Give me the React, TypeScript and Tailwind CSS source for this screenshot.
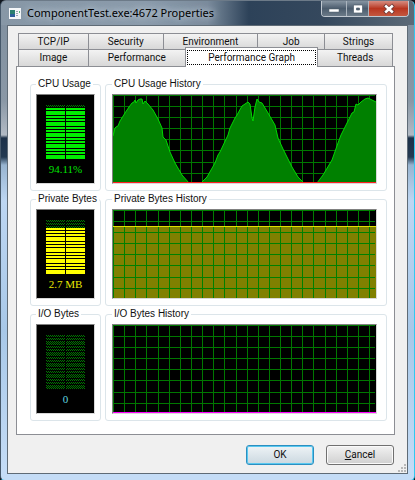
import React from 'react';

const CPU_POINTS =
  '0,41 2,33 3,32 5,31 7,26 12,18 16,12 19,8 21,7 22,5 23,8 25,5 27,4 29,4 30,9 32,6 35,9 40,15 45,24 49,33 50,42 53,45 57,57 62,68 69,80 76,88 88,88 94,82 102,68 105,60 107,57 115,40 117,33 122,23 124,20 129,11 132,9 135,7 137,9 139,23 140,26 142,12 144,4 146,7 149,8 155,18 162,30 165,43 170,54 179,72 185,82 191,88 204,88 210,80 219,65 225,48 228,40 234,28 239,18 241,17 243,9 245,10 248,7 252,4 255,3 259,5 263,7';

const COLUMNS = [0, 11, 22, 33, 45, 56, 67, 78, 89, 100, 111, 123, 134, 145, 156, 167, 178, 189, 200, 212, 223, 234, 245, 256];
const ROWS = [0, 11, 22, 33, 44, 55, 67, 78];
const SEGMENTS = 20;

interface MeterProps {
  value: string;
  level: number;
  color: string;
  textClass: string;
}

const Meter: React.FC<MeterProps> = ({ value, level, color, textClass }) => (
  <div className="flex h-[90px] flex-col items-center border border-[#808080] border-r-[#d8d8d8] border-b-[#d8d8d8] bg-black pt-[10px]">
    <svg className="h-[55px] w-[39px] shrink-0" viewBox="0 0 39 55" shapeRendering="crispEdges" aria-hidden="true">
      {Array.from({ length: SEGMENTS }, (_, i) => {
        const y = Math.round(i * 2.75);
        if (i >= SEGMENTS - level) {
          return (
            <g key={i} fill={color}>
              <rect x="0" y={y} width="19" height="2" />
              <rect x="20" y={y} width="19" height="2" />
            </g>
          );
        }
        // unlit segment: two dotted lines, offset like a checkerboard
        return (
          <g key={i} fill="#007800">
            {Array.from({ length: 19 }, (_, x) => (
              <rect key={x} x={x * 2 + (x > 9 ? 1 : 0)} y={y} width="1" height="1" />
            ))}
            {Array.from({ length: 19 }, (_, x) => (
              <rect key={x} x={x * 2 + (x > 8 ? 2 : 1)} y={y + 1} width="1" height="1" />
            ))}
          </g>
        );
      })}
    </svg>
    <span className={`mt-[2px] font-['Liberation_Serif',serif] text-[11px] leading-[14px] ${textClass}`}>{value}</span>
  </div>
);

const Grid: React.FC<{ color?: string }> = ({ color = '#007800' }) => (
  <g fill={color} shapeRendering="crispEdges">
    {COLUMNS.map((x) => (
      <rect key={x} x={x} y="0" width="1" height="88" />
    ))}
    {ROWS.map((y) => (
      <rect key={y} x="0" y={y} width="262" height="1" />
    ))}
  </g>
);

const Chart: React.FC<{ label: string; children: React.ReactNode }> = ({ label, children }) => (
  <div className="h-[90px] border border-[#808080] border-r-[#d8d8d8] border-b-[#d8d8d8] bg-black">
    <svg className="block h-[88px] w-full" viewBox="0 0 263 88" preserveAspectRatio="none" role="img" aria-label={label}>
      {children}
    </svg>
  </div>
);

const Group: React.FC<{ title: string; className: string; children: React.ReactNode }> = ({ title, className, children }) => (
  <fieldset className={`min-w-0 rounded-[3px] border border-[#dce5ea] pb-[6px] ${className}`}>
    <legend className="mb-[3px] whitespace-nowrap px-[2px] font-['Liberation_Sans',sans-serif] text-[10px] leading-[14px] text-[#111]">
      {title}
    </legend>
    {children}
  </fieldset>
);

const Tab: React.FC<{ label: string; className: string }> = ({ label, className }) => (
  <button
    role="tab"
    aria-selected="false"
    className={`min-w-0 whitespace-nowrap border-l border-t border-[#8c8e94] bg-linear-to-b from-[#f3f3f3] to-[#d8d8d8] text-center leading-[14px] ${className}`}
  >
    {label}
  </button>
);

export default function App() {
  return (
    <div className="bg-[#10161e]">
      <main className="rounded-t-[6px] rounded-b-[5px] border border-[#30c8f0] border-t-[#6c7a88] border-l-[#46586a] bg-[linear-gradient(180deg,#7f8f9f_0px,#8a98a6_100px,#b2bac4_134px,#1c3048_137px,#243a52_156px,#98b4d0_164px,#bdd6f2_200px,#a8c8e8_330px,#c4dcf6_470px)] px-[6px] pb-[6px] font-['Roboto',sans-serif] text-[10px] text-[#101010]">
        {/* Title bar */}
        <header className="-mx-[6px] flex h-[24px] items-start rounded-t-[5px] bg-[linear-gradient(90deg,#8797a6_0%,#8b9bab_35%,#7a8b9c_50%,#2d4259_60%,#35485d_78%,#5c6a78_100%)] pl-[8px] pr-[5px]">
          <svg className="mt-[7px] h-[11px] w-[12px] shrink-0" viewBox="0 0 12 11" aria-hidden="true">
            <rect width="12" height="11" fill="#f4f6f8" />
            <rect x="1" y="2" width="5" height="4" fill="#2a8070" />
            <rect x="1" y="6" width="5" height="3" fill="#2d5f9a" />
            <path d="M7 3.500h2M7 5.500h2M7 7.500h2" stroke="#9aa6b0" />
            <rect x="10" y="3" width="1" height="2" fill="#58b878" />
          </svg>
          <h1 className="ml-[6px] mt-[3px] flex-1 whitespace-nowrap font-['Noto_Sans',sans-serif] text-[11px] leading-[18px] text-black [text-shadow:0_0_6px_#cfdbe6,0_0_8px_#b5c5d4]">
            ComponentTest.exe:4672 Properties
          </h1>
          <div className="flex h-[16px] overflow-hidden rounded-b-[4px] border border-t-0 border-[#c0c8d0]">
            <button aria-label="Minimize" className="flex w-[25px] items-center justify-center border-r border-[#aab4be] bg-linear-to-b from-[#8795a2] via-[#4b5c6d] to-[#6b7a88]">
              <svg width="12" height="12" viewBox="0 0 12 12"><rect x="1" y="6" width="10" height="3" fill="#fff" stroke="#50606e" strokeWidth=".5" /></svg>
            </button>
            <button aria-label="Maximize" className="flex w-[22px] items-center justify-center border-r border-[#aab4be] bg-linear-to-b from-[#8795a2] via-[#4b5c6d] to-[#6b7a88]">
              <svg width="12" height="12" viewBox="0 0 12 12"><path d="M1.500 2h9v8h-9z M4.500 5v2h3V5z" fill="#fff" fillRule="evenodd" stroke="#50606e" strokeWidth=".7" /></svg>
            </button>
            <button aria-label="Close" className="flex w-[39px] items-center justify-center bg-linear-to-b from-[#d58b80] via-[#b8351f] to-[#c4573f]">
              <svg width="12" height="12" viewBox="0 0 12 12"><path d="M1.500 2l9 8M10.500 2l-9 8" stroke="#6d3a38" strokeWidth="4" /><path d="M2.200 2.500l7.600 7M9.800 2.500l-7.600 7" stroke="#fff" strokeWidth="2.500" /></svg>
            </button>
          </div>
        </header>

        {/* Client area */}
        <div className="relative border border-[#5f6b76] bg-[#f0f0f0] pl-[8px] pr-[12px] pt-[7px]">
          <div role="tablist" className="flex flex-col px-[2px]">
            <div className="flex h-[16px]">
              <Tab label="TCP/IP" className="flex-[70]" />
              <Tab label="Security" className="flex-[75]" />
              <Tab label="Environment" className="flex-[95]" />
              <Tab label="Job" className="flex-[67]" />
              <Tab label="Strings" className="flex-[68] border-r" />
            </div>
            <div className="flex h-[17px]">
              <Tab label="Image" className="flex-[70]" />
              <Tab label="Performance" className="flex-[98]" />
              <button
                role="tab"
                aria-selected="true"
                className="relative z-10 -mb-px -mt-[2px] min-w-0 flex-[132] whitespace-nowrap border border-b-0 border-[#8c8e94] bg-white px-[1px]"
              >
                <span className="block h-[15px] border border-dotted border-black leading-[13px]">Performance Graph</span>
              </button>
              <Tab label="Threads" className="flex-[75] border-r border-l-0" />
            </div>
          </div>

          <section className="flex flex-col gap-[1px] border border-[#8c8e94] bg-white pb-[13px] pl-[13px] pr-[7px] pt-[10px]">
            <div className="flex gap-[4px]">
              <Group title="CPU Usage" className="w-[71px] px-[5px]">
                <Meter value="94.11%" level={19} color="#00f000" textClass="text-[#00e000]" />
              </Group>
              <Group title="CPU Usage History" className="flex-1 pl-[6px] pr-[9px]">
                <Chart label="CPU usage history">
                  <Grid />
                  <polygon points={`0,88 ${CPU_POINTS} 263,88`} fill="#008000" />
                  <polyline points={CPU_POINTS} fill="none" stroke="#00d800" />
                  <rect y="87" width="263" height="1" fill="#ff2020" />
                </Chart>
              </Group>
            </div>
            <div className="flex gap-[4px]">
              <Group title="Private Bytes" className="w-[71px] px-[5px]">
                <Meter value="2.7 MB" level={17} color="#ffff00" textClass="text-[#e8e800]" />
              </Group>
              <Group title="Private Bytes History" className="flex-1 pl-[6px] pr-[9px]">
                <Chart label="Private bytes history">
                  <rect y="17" width="263" height="71" fill="#808000" />
                  <Grid color="#008000" />
                  <rect y="16" width="263" height="1" fill="#e0e000" />
                </Chart>
              </Group>
            </div>
            <div className="flex gap-[4px]">
              <Group title="I/O Bytes" className="w-[71px] px-[5px]">
                <Meter value="0" level={0} color="#00ffff" textClass="text-[#60d8e0]" />
              </Group>
              <Group title="I/O Bytes History" className="flex-1 pl-[6px] pr-[9px]">
                <Chart label="I/O bytes history">
                  <Grid />
                  <rect y="87" width="263" height="1" fill="#ff00ff" />
                </Chart>
              </Group>
            </div>
          </section>

          <footer className="flex justify-end gap-[12px] pb-[8px] pr-[1px] pt-[10px]">
            <button className="h-[20px] w-[68px] rounded-[3px] border border-[#2c8fc0] bg-linear-to-b from-[#eef3f6] to-[#cbd8e0] leading-[16px] shadow-[inset_0_0_0_1px_#58c8f0]">OK</button>
            <button className="h-[20px] w-[68px] rounded-[3px] border border-[#707070] bg-linear-to-b from-[#f2f2f2] to-[#d0d0d0] leading-[16px] shadow-[inset_0_0_0_1px_#fafafa]">
              <u>C</u>ancel
            </button>
          </footer>

          {/* Resize grip */}
          <svg className="absolute bottom-[1px] right-[1px] h-[8px] w-[8px]" viewBox="0 0 8 8" aria-hidden="true">
            <path d="M6 0h2v2H6zM3 3h2v2H3zM6 3h2v2H6zM0 6h2v2H0zM3 6h2v2H3zM6 6h2v2H6z" fill="#b8b8b8" />
          </svg>
        </div>
      </main>
    </div>
  );
}
